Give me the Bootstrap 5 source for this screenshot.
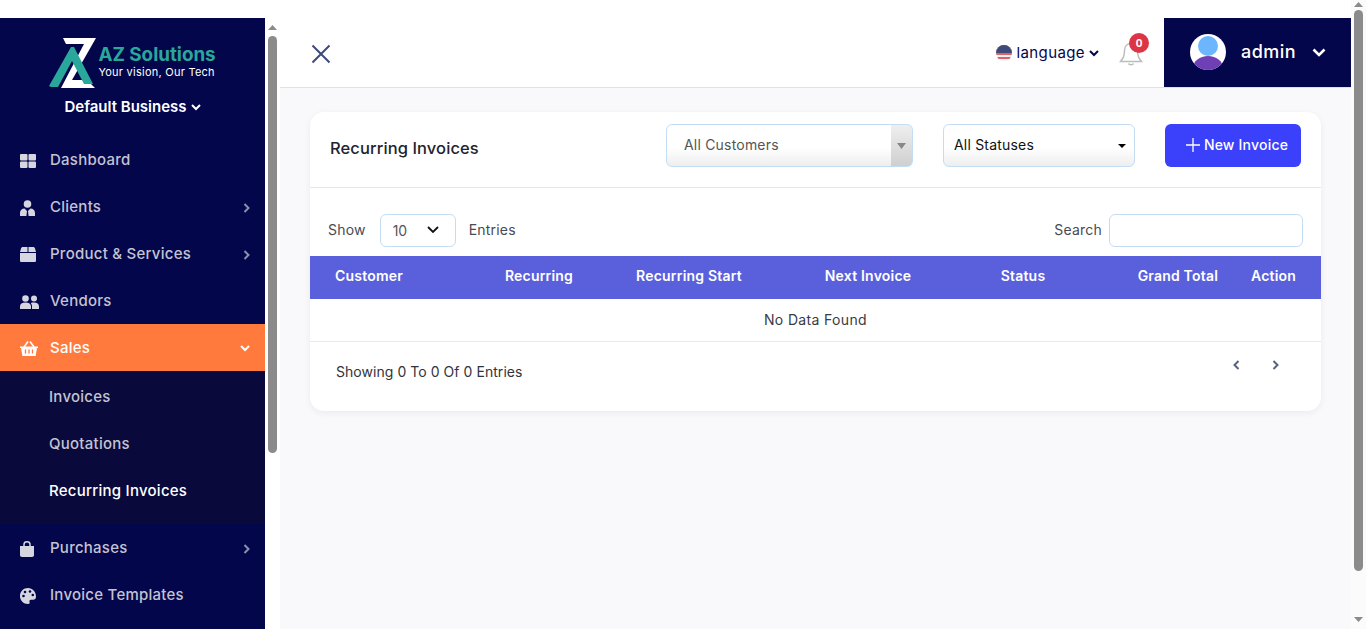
<!DOCTYPE html>
<html lang="en">
<head>
    <meta charset="UTF-8">
    <meta name="viewport" content="width=device-width, initial-scale=1.0">
    <title>Recurring Invoices</title>
    <link href="https://cdn.jsdelivr.net/npm/bootstrap@5.3.0/dist/css/bootstrap.min.css" rel="stylesheet">
    <style>
        html { overflow: hidden; }
        body { font-family: Inter, "Liberation Sans", sans-serif; background: #f9f8fb; color: #2b2b33; height: 629px; overflow: hidden; font-size: 14px; }

        /* drawn scrollbars */
        .side-rail { width: 15px; flex: none; background: #fff; padding: 0 3px; }
        .page-rail { width: 15px; flex: none; background: #fbfbfb; padding: 0 3px; }
        .rail-arrow { display: block; margin: 0 auto; }
        .side-rail .rail-arrow { margin-top: 25px; }
        .side-rail .rail-thumb { height: 417px; margin-top: 6px; }
        .page-rail .rail-thumb { height: 561px; margin-top: 3px; }
        .page-rail .rail-arrow { margin-top: 2px; }
        .page-rail .rail-down { margin-top: 46px; }
        .rail-thumb { background: #8b8b8b; border-radius: 5px; }

        .side-panel { width: 265px; height: 629px; border-top: 18px solid #fff; flex: none; background: #03064a; overflow: hidden; }
        .brand-box { height: 118px; padding-top: 20px; }
        .brand-logo { margin-right: 1px; }
        .brand-name { color: #2aa79b; font-weight: 700; font-size: 18.8px; line-height: 20px; }
        .brand-tag { color: #fff; font-size: 11px; line-height: 14px; letter-spacing: .25px; }
        .brand-text { margin-bottom: 4px; }
        .biz-pick { color: #fff; font-weight: 600; font-size: 15px; line-height: 20px; }
        .side-link { height: 47px; padding: 2px 15px 0 20px; color: #c3c3d3; font-size: 15px; letter-spacing: .25px; font-weight: 500; text-decoration: none; }
        .side-link .ico { width: 30px; flex: none; }
        .side-link.on { background: #ff7a3c; color: #fff; }
        .sub-box { background: #090a3b; height: 153px; padding-top: 3px; }
        .sub-link { height: 47px; padding-left: 49px; color: #c3c3d3; font-size: 15px; letter-spacing: .25px; font-weight: 500; text-decoration: none; }
        .sub-link.on { color: #fff; }

        .top-bar { height: 88px; background: #fff; border-bottom: 1px solid #dee2e6; padding-top: 18px; }
        .menu-close { margin-left: 31px; margin-top: 3px; }
        .lang-pick { color: #03064a; font-size: 15px; letter-spacing: .4px; font-weight: 400; margin-right: 20px; margin-top: 1px; }
        .flag-dot { width: 16px; height: 16px; border-radius: 50%; overflow: hidden; background: repeating-linear-gradient(#d9646a 0 2px, #f4f0f0 2px 4px); position: relative; }
        .flag-dot::before { content: ""; position: absolute; left: 0; top: 0; right: 0; height: 8px; background: #3f4a78; }
        .bell-box { width: 45px; height: 34px; position: relative; margin-top: 5px; }
        .bell-num { position: absolute; left: 10px; top: -5px; width: 20px; height: 20px; background: #dc3545; color: #fff; font-size: 10px; font-weight: 700; }
        .admin-box { width: 187px; height: 69px; background: #03064a; color: #fff; padding-left: 26px; }
        .admin-name { font-size: 18px; font-weight: 500; letter-spacing: .5px; margin-left: 15px; width: 71px; margin-bottom: 3px; }
        .face-dot { width: 36px; height: 36px; flex: none; margin-bottom: 2px; }
        .admin-caret { margin-bottom: 1px; }

        .page-wrap { padding: 24px 30px 0; }
        .sheet { border-radius: 14px; border: 0; box-shadow: 0 2px 6px rgba(60, 60, 90, .07); height: 299px; }
        .sheet-head { height: 76px; padding: 0 20px; border-bottom: 1px solid #e6e7ea; }
        .sheet-title { font-size: 16.5px; font-weight: 500; color: #22232b; letter-spacing: .1px; margin-bottom: 2px; }
        .pick { height: 43px; border: 1px solid #c5ddf3; border-radius: 6px; font-size: 14px; appearance: none; outline: 0; margin-bottom: 8px; }
        .pick-customer { width: 247px; margin-right: 30px; padding: 0 0 3px 17px; color: #555; letter-spacing: .2px; background: url("data:image/svg+xml,%3Csvg xmlns='http://www.w3.org/2000/svg' width='9' height='6'%3E%3Cpath d='M4.5 6L9 0H0z' fill='%23888'/%3E%3C/svg%3E") no-repeat right 6px center, linear-gradient(#efefef, #cfcfcf) no-repeat right / 21px 100%, linear-gradient(#fff 55%, #eee); }
        .pick-status { width: 192px; margin-right: 30px; padding: 0 0 3px 10px; color: #111; letter-spacing: .2px; background: url("data:image/svg+xml,%3Csvg xmlns='http://www.w3.org/2000/svg' width='8' height='4'%3E%3Cpath d='M4 4L8 0H0z' fill='%23000'/%3E%3C/svg%3E") no-repeat right 8px center, linear-gradient(#fff 55%, #eee); }
        .new-btn { width: 136px; height: 43px; background: #3b40fb; color: #fff; border-radius: 6px; font-size: 14px; font-weight: 500; padding: 0 0 2px 8px; border: 0; letter-spacing: .2px; margin-bottom: 8px; }
        .new-btn:hover { background: #3b40fb; color: #fff; }
        .tool-row { height: 68px; padding: 16px 18px 0; color: #4a4a52; letter-spacing: .2px; }
        .tool-row span { margin-bottom: 2px; }
        .size-pick { width: 76px; height: 33px; border: 1px solid #c5ddf3; border-radius: 6px; margin: 0 13px 0 14px; padding: 0 12px; background: #fff url("data:image/svg+xml,%3Csvg xmlns='http://www.w3.org/2000/svg' width='12' height='8'%3E%3Cpath d='M1 1l5 5 5-5' stroke='%23111' stroke-width='1.8' fill='none'/%3E%3C/svg%3E") no-repeat right 16px center; appearance: none; color: #555; outline: 0; }
        .search-box { width: 194px; height: 33px; border: 1px solid #c5ddf3; border-radius: 6px; margin-left: 7px; outline: 0; }
        .data-grid { table-layout: fixed; width: 100%; margin: 0; }
        .data-grid th { background: #5a5fdc; color: #fff; font-weight: 600; font-size: 14px; height: 43px; padding: 0 0 4px; text-align: center; vertical-align: middle; border-bottom: 1px solid #fff; box-shadow: none; letter-spacing: .2px; }
        .data-grid td { height: 42px; padding: 0 0 2px; text-align: center; vertical-align: middle; border-bottom: 1px solid #e8e9ec; color: #3a3a42; letter-spacing: .35px; }
        .data-grid th:first-child { text-align: left; padding-left: 25px; width: 170px; }
        .data-grid .col-rec { width: 118px; }
        .data-grid .col-start { width: 182px; }
        .data-grid .col-next { width: 176px; }
        .data-grid .col-status { width: 134px; }
        .data-grid th.col-total { width: 140px; text-align: right; padding-right: 12px; }
        .data-grid th.col-act { text-align: right; padding-right: 25px; }
        .foot-row { padding: 0 0 0 26px; color: #33333b; letter-spacing: .05px; height: 60px; }
        .pager-btns { width: 46px; margin-right: 42px; margin-top: -14px; }
    </style>
</head>
<body class="d-flex">
    <aside class="side-panel">
        <div class="brand-box d-flex flex-column align-items-center">
            <div class="d-flex align-items-center">
                <svg class="brand-logo" width="48" height="51" viewBox="50 38 48 51">
                    <path d="M64 38H97L73 80H88L96 88H62L85 44H67z" fill="#fff"/>
                    <path d="M50 86L72 47H75L94 84H85L73 61L59 87H52z" fill="#2aa79b"/>
                </svg>
                <div class="brand-text">
                    <div class="brand-name">AZ Solutions</div>
                    <div class="brand-tag">Your vision, Our Tech</div>
                </div>
            </div>
            <div class="biz-pick d-flex align-items-center gap-1 mt-2">Default Business
                <svg width="10" height="7" viewBox="0 0 10 7"><path d="M1 1l4 4 4-4" stroke="#fff" stroke-width="2" fill="none"/></svg>
            </div>
        </div>
        <nav>
            <a href="#" class="side-link d-flex align-items-center"><span class="ico d-flex"><svg width="16" height="14" viewBox="0 0 16 14" fill="#d6d6e0"><rect width="7.5" height="6.5" rx="1"/><rect x="8.5" width="7.5" height="6.5" rx="1"/><rect y="7.5" width="7.5" height="6.5" rx="1"/><rect x="8.5" y="7.5" width="7.5" height="6.5" rx="1"/></svg></span>Dashboard</a>
            <a href="#" class="side-link d-flex align-items-center"><span class="ico d-flex"><svg width="15" height="16" viewBox="0 0 15 16" fill="#d6d6e0"><circle cx="7.5" cy="4" r="3.8"/><path d="M0 16v-3c0-3 2-4.500 4.500-4.500L7 11l-.6 5zM15 16v-3c0-3-2-4.500-4.500-4.500L8 11l.6 5z"/></svg></span>Clients<svg class="ms-auto" width="7" height="10" viewBox="0 0 7 10"><path d="M1.500 1l4 4-4 4" stroke="#8e90ab" stroke-width="2" fill="none"/></svg></a>
            <a href="#" class="side-link d-flex align-items-center"><span class="ico d-flex"><svg width="16" height="15" viewBox="0 0 16 15" fill="#d6d6e0"><path d="M3 0h4.500v5H0L1 1.500C1.300.5 2 0 3 0zM8.500 0H13c1 0 1.700.5 2 1.500L16 5H8.500zM0 6h16v7.500c0 1-.6 1.500-1.500 1.500h-13C.6 15 0 14.500 0 13.500z"/></svg></span>Product &amp; Services<svg class="ms-auto" width="7" height="10" viewBox="0 0 7 10"><path d="M1.500 1l4 4-4 4" stroke="#8e90ab" stroke-width="2" fill="none"/></svg></a>
            <a href="#" class="side-link d-flex align-items-center"><span class="ico d-flex"><svg width="19" height="14" viewBox="0 0 19 14" fill="#d6d6e0"><circle cx="5.500" cy="3.500" r="3.300"/><circle cx="14" cy="3.500" r="3"/><path d="M0 14v-2.500C0 9 2 7.500 5.500 7.500S11 9 11 11.500V14zM12 14v-3c0-1-.5-2-1.200-3 1-.5 2-.6 3.200-.6 3 0 5 1.500 5 4V14z"/></svg></span>Vendors</a>
            <a href="#" class="side-link on d-flex align-items-center"><span class="ico d-flex"><svg width="18" height="15" viewBox="0 0 18 15" fill="#fff"><path d="M0 5.500h18v1.500h-1L15.600 15H2.400L1 7H0z"/><path d="M4 6L8 0.500M14 6L10 0.500" stroke="#fff" stroke-width="1.600"/><path d="M5.500 8.500v4M9 8.500v4M12.500 8.500v4" stroke="#ff7a3c" stroke-width="1.300"/></svg></span>Sales<svg class="ms-auto" width="10" height="7" viewBox="0 0 10 7"><path d="M1 1l4 4 4-4" stroke="#fff" stroke-width="2" fill="none"/></svg></a>
            <div class="sub-box">
                <a href="#" class="sub-link d-flex align-items-center">Invoices</a>
                <a href="#" class="sub-link d-flex align-items-center">Quotations</a>
                <a href="#" class="sub-link on d-flex align-items-center">Recurring Invoices</a>
            </div>
            <a href="#" class="side-link d-flex align-items-center"><span class="ico d-flex"><svg width="14" height="16" viewBox="0 0 14 16" fill="#d6d6e0"><path d="M0 5h14v9c0 1.200-.8 2-2 2H2c-1.200 0-2-.8-2-2z"/><path d="M4 7V3.500C4 1.800 5.300.8 7 .8s3 1 3 2.700V7" stroke="#d6d6e0" stroke-width="1.500" fill="none"/></svg></span>Purchases<svg class="ms-auto" width="7" height="10" viewBox="0 0 7 10"><path d="M1.500 1l4 4-4 4" stroke="#8e90ab" stroke-width="2" fill="none"/></svg></a>
            <a href="#" class="side-link d-flex align-items-center"><span class="ico d-flex"><svg width="16" height="16" viewBox="0 0 16 16"><path d="M8 0C3.500 0 0 3.500 0 8s3.500 8 8 8c1.500 0 2-1 1.500-2-.5-1.200.2-2.300 1.500-2.300h2.200c1.600 0 2.800-1.300 2.800-3C16 3.500 12.500 0 8 0z" fill="#d6d6e0"/><circle cx="3.500" cy="8" r="1.300" fill="#03064a"/><circle cx="5" cy="4" r="1.300" fill="#03064a"/><circle cx="10" cy="3.500" r="1.300" fill="#03064a"/><circle cx="12.800" cy="7" r="1.300" fill="#03064a"/></svg></span>Invoice Templates</a>
        </nav>
    </aside>
    <div class="side-rail">
        <svg class="rail-arrow" width="9" height="5" viewBox="0 0 9 5"><path d="M4.500 0L9 5H0z" fill="#8b8b8b"/></svg>
        <div class="rail-thumb"></div>
    </div>

    <div class="flex-grow-1">
        <header class="top-bar d-flex align-items-center">
            <svg class="menu-close" width="20" height="20" viewBox="0 0 20 20"><path d="M1.500 1.500l17 17M18.500 1.500l-17 17" stroke="#3b4a78" stroke-width="2" fill="none"/></svg>
            <div class="lang-pick d-flex align-items-center ms-auto">
                <span class="flag-dot me-1"></span>language
                <svg class="ms-1" width="10" height="7" viewBox="0 0 10 7"><path d="M1 1l4 4 4-4" stroke="#03064a" stroke-width="2" fill="none"/></svg>
            </div>
            <div class="bell-box">
                <svg width="24" height="25" viewBox="0 0 24 25" class="mt-1"><path d="M12 1.500c-4 0-6.500 3-6.500 7 0 6-1.500 8-4 11h21c-2.500-3-4-5-4-11 0-4-2.500-7-6.500-7z" fill="#fff" stroke="#bdbdbd" stroke-width="1.500"/><path d="M9.500 21.500c.5 1.500 4.500 1.500 5 0" stroke="#bdbdbd" stroke-width="1.500" fill="none"/></svg>
                <span class="bell-num rounded-circle d-flex align-items-center justify-content-center">0</span>
            </div>
            <div class="admin-box d-flex align-items-center">
                <svg class="face-dot" viewBox="0 0 36 36"><defs><clipPath id="faceClip"><circle cx="18" cy="18" r="18"/></clipPath></defs><circle cx="18" cy="18" r="18" fill="#fff"/><circle cx="18" cy="12" r="10" fill="#6cb6ff"/><ellipse cx="18" cy="34" rx="15" ry="12" fill="#6f3fb5" clip-path="url(#faceClip)"/></svg>
                <span class="admin-name">admin</span>
                <svg class="admin-caret" width="14" height="9" viewBox="0 0 14 9"><path d="M1.500 1.500l5.500 5.500 5.500-5.500" stroke="#fff" stroke-width="2.600" fill="none"/></svg>
            </div>
        </header>

        <main class="page-wrap">
            <div class="card sheet">
                <div class="sheet-head d-flex align-items-center">
                    <div class="sheet-title me-auto">Recurring Invoices</div>
                    <select class="pick pick-customer"><option>All Customers</option></select>
                    <select class="pick pick-status"><option>All Statuses</option></select>
                    <button class="btn new-btn d-flex align-items-center justify-content-center gap-1" type="button">
                        <svg width="14" height="14" viewBox="0 0 14 14"><path d="M7 0v14M0 7h14" stroke="#fff" stroke-width="1.300"/></svg>New Invoice
                    </button>
                </div>
                <div class="tool-row d-flex align-items-center">
                    <span>Show</span>
                    <select class="size-pick"><option>10</option></select>
                    <span class="me-auto">Entries</span>
                    <span>Search</span>
                    <input type="text" class="search-box">
                </div>
                <table class="table data-grid">
                    <thead>
                        <tr>
                            <th>Customer</th>
                            <th class="col-rec">Recurring</th>
                            <th class="col-start">Recurring Start</th>
                            <th class="col-next">Next Invoice</th>
                            <th class="col-status">Status</th>
                            <th class="col-total">Grand Total</th>
                            <th class="col-act">Action</th>
                        </tr>
                    </thead>
                    <tbody>
                        <tr><td colspan="7">No Data Found</td></tr>
                    </tbody>
                </table>
                <div class="foot-row d-flex align-items-center justify-content-between">
                    <span>Showing 0 To 0 Of 0 Entries</span>
                    <div class="pager-btns d-flex justify-content-between">
                        <svg width="7" height="10" viewBox="0 0 7 10"><path d="M5.500 1l-4 4 4 4" stroke="#56657f" stroke-width="2" fill="none"/></svg>
                        <svg width="7" height="10" viewBox="0 0 7 10"><path d="M1.500 1l4 4-4 4" stroke="#56657f" stroke-width="2" fill="none"/></svg>
                    </div>
                </div>
            </div>
        </main>
    </div>
    <div class="page-rail">
        <svg class="rail-arrow" width="9" height="5" viewBox="0 0 9 5"><path d="M4.500 0L9 5H0z" fill="#8b8b8b"/></svg>
        <div class="rail-thumb"></div>
        <svg class="rail-arrow rail-down" width="9" height="5" viewBox="0 0 9 5"><path d="M4.500 5L9 0H0z" fill="#8b8b8b"/></svg>
    </div>

    <script src="https://cdn.jsdelivr.net/npm/bootstrap@5.3.0/dist/js/bootstrap.bundle.min.js"></script>
</body>
</html>
